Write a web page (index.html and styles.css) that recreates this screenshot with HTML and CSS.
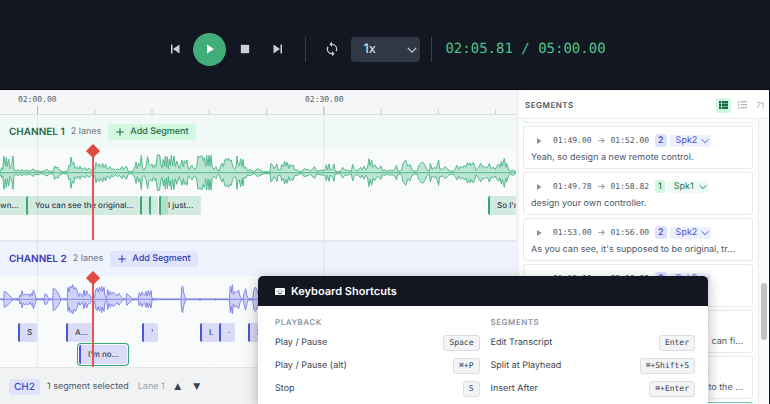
FILE: index.html
```html
<!DOCTYPE html>
<html lang="en">
<head>
<meta charset="utf-8">
<meta name="viewport" content="width=device-width, initial-scale=1.0">
<title>Segment editor</title>
<link rel="stylesheet" href="styles.css">
</head>
<body>

<svg class="sprite" aria-hidden="true">
	<symbol id="i-play" viewBox="0 0 24 24"><path d="M6 3v18l14-9z"/></symbol>
	<symbol id="i-prev" viewBox="0 0 24 24"><path d="M4 3h3v18H4zM21 3v18L8 12z"/></symbol>
	<symbol id="i-next" viewBox="0 0 24 24"><path d="M17 3h3v18h-3zM3 3v18l13-9z"/></symbol>
	<symbol id="i-stop" viewBox="0 0 24 24"><path d="M2 2h20v20H2z"/></symbol>
	<symbol id="i-sync" viewBox="0 0 24 24"><path d="M12 4V1L8 5l4 4V6a6 6 0 0 1 6 6c0 1-.25 1.970-.7 2.800l1.460 1.460A8 8 0 0 0 12 4zm0 14a6 6 0 0 1-6-6c0-1 .25-1.970.7-2.800L5.240 7.740A8 8 0 0 0 12 20v3l4-4-4-4z"/></symbol>
	<symbol id="i-down" viewBox="0 0 24 24"><path d="M2 7l10 10L22 7" fill="none" stroke="currentColor" stroke-width="3"/></symbol>
	<symbol id="i-arrow" viewBox="0 0 24 24"><path d="M1 12h20M13 4l8 8-8 8" fill="none" stroke="currentColor" stroke-width="4"/></symbol>
	<symbol id="i-plus" viewBox="0 0 24 24"><path d="M12 1v22M1 12h22" fill="none" stroke="currentColor" stroke-width="3"/></symbol>
	<symbol id="i-rows" viewBox="0 0 27 24"><path d="M0 0h7v7H0zM9 0h18v7H9zM0 8.500h7v7H0zM9 8.500h18v7H9zM0 17h7v7H0zM9 17h18v7H9z"/></symbol>
	<symbol id="i-list" viewBox="0 0 27 24"><path d="M0 1h4v4H0zM8 1h19v3H8zM0 10h4v4H0zM8 10h19v3H8zM0 19h4v4H0zM8 19h19v3H8z"/></symbol>
	<symbol id="i-keys" viewBox="0 0 30 21"><path fill-rule="evenodd" d="M3 0h24a3 3 0 0 1 3 3v15a3 3 0 0 1-3 3H3a3 3 0 0 1-3-3V3a3 3 0 0 1 3-3zM5 5v2h2V5zm5 0v2h2V5zm4 0v2h2V5zm4 0v2h2V5zm5 0v2h2V5zM5 10v2h2v-2zm5 0v2h2v-2zm4 0v2h2v-2zm4 0v2h2v-2zm5 0v2h2v-2zM9 15v2h12v-2z"/></symbol>
</svg>

<header class="player">
	<button class="ctl" aria-label="Previous"><svg><use href="#i-prev"/></svg></button>
	<button class="ctl play" aria-label="Play"><svg><use href="#i-play"/></svg></button>
	<button class="ctl stop" aria-label="Stop"><svg><use href="#i-stop"/></svg></button>
	<button class="ctl" aria-label="Next"><svg><use href="#i-next"/></svg></button>
	<span class="divider"></span>
	<button class="ctl sync" aria-label="Loop"><svg><use href="#i-sync"/></svg></button>
	<span class="pick speed">
		<select aria-label="Playback speed"><option>1x</option></select>
		<svg><use href="#i-down"/></svg>
	</span>
	<span class="divider"></span>
	<span class="clock">02:05.81 / 05:00.00</span>
</header>

<div class="workspace">
	<main class="timeline">
		<div class="ruler">
			<span class="stamp">02:00.00</span>
			<span class="stamp">02:30.00</span>
		</div>

		<section class="channel ch1">
			<div class="channel-head">
				<h2>CHANNEL 1</h2>
				<span class="lanes-count">2 lanes</span>
				<button class="add"><svg><use href="#i-plus"/></svg>Add Segment</button>
			</div>
			<div class="wave"><svg viewBox="0 0 1551 141" data-wave="ch1"></svg></div>
			<div class="lanes">
				<div class="lane">
					<div class="seg" style="left:-9px;width:35px">wn...</div>
					<div class="seg" style="left:26px;width:114px">You can see the original...</div>
					<div class="seg" style="left:140px;width:9px"></div>
					<div class="seg" style="left:149px;width:7px"></div>
					<div class="seg" style="left:159px;width:6px"></div>
					<div class="seg" style="left:159px;width:42px">I just...</div>
					<div class="seg" style="left:488px;width:90px">So I'm</div>
				</div>
				<div class="lane"></div>
			</div>
			<div class="playhead"></div>
		</section>

		<section class="channel ch2">
			<div class="channel-head">
				<h2>CHANNEL 2</h2>
				<span class="lanes-count">2 lanes</span>
				<button class="add"><svg><use href="#i-plus"/></svg>Add Segment</button>
			</div>
			<div class="wave"><svg viewBox="0 0 1551 141" data-wave="ch2"></svg></div>
			<div class="lanes">
				<div class="lane">
					<div class="seg" style="left:18px;width:19px">S</div>
					<div class="seg" style="left:66px;width:27px">A...</div>
					<div class="seg" style="left:142px;width:16px">'</div>
					<div class="seg" style="left:200px;width:19px">I.</div>
					<div class="seg" style="left:219px;width:16px">·</div>
					<div class="seg" style="left:248px;width:24px">S</div>
				</div>
				<div class="lane">
					<div class="seg selected" style="left:79px;width:48px">I'm no...</div>
				</div>
			</div>
			<div class="playhead"></div>
		</section>

		<footer class="selection">
			<span class="ch-tag">CH2</span>
			<span>1 segment selected</span>
			<span class="lane-name">Lane 1</span>
			<button class="move" aria-label="Move up">▲</button>
			<button class="move" aria-label="Move down">▼</button>
		</footer>
	</main>

	<aside class="sidebar">
		<div class="side-head">
			<h2>SEGMENTS</h2>
			<button class="view on" aria-label="Detailed view"><svg><use href="#i-rows"/></svg></button>
			<button class="view" aria-label="Compact view"><svg><use href="#i-list"/></svg></button>
			<span class="total">71</span>
		</div>
		<div class="side-body">
			<div class="cards">
				<article class="card"></article>
				<article class="card spk2">
					<div class="meta">
						<button class="mini" aria-label="Play segment"><svg><use href="#i-play"/></svg></button>
						<time>01:49.00</time><svg class="to"><use href="#i-arrow"/></svg><time>01:52.00</time>
						<span class="num">2</span>
						<span class="pick"><select aria-label="Speaker"><option>Spk2</option></select><svg><use href="#i-down"/></svg></span>
					</div>
					<p>Yeah, so design a new remote control.</p>
				</article>
				<article class="card spk1">
					<div class="meta">
						<button class="mini" aria-label="Play segment"><svg><use href="#i-play"/></svg></button>
						<time>01:49.78</time><svg class="to"><use href="#i-arrow"/></svg><time>01:58.82</time>
						<span class="num">1</span>
						<span class="pick"><select aria-label="Speaker"><option>Spk1</option></select><svg><use href="#i-down"/></svg></span>
					</div>
					<p>design your own controller.</p>
				</article>
				<article class="card spk2">
					<div class="meta">
						<button class="mini" aria-label="Play segment"><svg><use href="#i-play"/></svg></button>
						<time>01:53.00</time><svg class="to"><use href="#i-arrow"/></svg><time>01:56.00</time>
						<span class="num">2</span>
						<span class="pick"><select aria-label="Speaker"><option>Spk2</option></select><svg><use href="#i-down"/></svg></span>
					</div>
					<p>As you can see, it's supposed to be original, tr...</p>
				</article>
				<article class="card spk2">
					<div class="meta">
						<button class="mini" aria-label="Play segment"><svg><use href="#i-play"/></svg></button>
						<time>01:58.00</time><svg class="to"><use href="#i-arrow"/></svg><time>02:00.00</time>
						<span class="num">2</span>
						<span class="pick"><select aria-label="Speaker"><option>Spk2</option></select><svg><use href="#i-down"/></svg></span>
					</div>
				</article>
				<article class="card spk1 tail">
					<div class="meta">
						<span class="pick"><select aria-label="Speaker"><option>Spk1</option></select><svg><use href="#i-down"/></svg></span>
					</div>
					<p>can fi...</p>
				</article>
				<article class="card spk2 tail">
					<div class="meta">
						<span class="pick"><select aria-label="Speaker"><option>Spk2</option></select><svg><use href="#i-down"/></svg></span>
					</div>
					<p>to the ...</p>
				</article>
				<article class="card current"></article>
			</div>
			<div class="scrollbar"><div class="thumb"></div></div>
		</div>
	</aside>
</div>

<div class="modal" role="dialog" aria-labelledby="modal-title">
	<div class="modal-head">
		<svg><use href="#i-keys"/></svg>
		<h2 id="modal-title">Keyboard Shortcuts</h2>
	</div>
	<div class="modal-body">
		<section>
			<h3>PLAYBACK</h3>
			<dl>
				<div><dt>Play / Pause</dt><dd><kbd>Space</kbd></dd></div>
				<div><dt>Play / Pause (alt)</dt><dd><kbd>⌘+P</kbd></dd></div>
				<div><dt>Stop</dt><dd><kbd>S</kbd></dd></div>
			</dl>
		</section>
		<section>
			<h3>SEGMENTS</h3>
			<dl>
				<div><dt>Edit Transcript</dt><dd><kbd>Enter</kbd></dd></div>
				<div><dt>Split at Playhead</dt><dd><kbd>⌘+Shift+S</kbd></dd></div>
				<div><dt>Insert After</dt><dd><kbd>⌘+Enter</kbd></dd></div>
			</dl>
		</section>
	</div>
</div>

<script src="waves.js"></script>
</body>
</html>
```
FILE: styles.css
```css
* {
	box-sizing: border-box;
}

body,h2,h3,p,dl,dd {
	margin: 0;
	padding: 0;
}

body {
	display: flex;
	flex-direction: column;
	height: 100vh;
	overflow: hidden;
	position: relative;
	background: #121721;
	color: #4b5563;
	font-family: Inter, "Liberation Sans", sans-serif;
	font-size: 9px;
	line-height: 14px;
	text-rendering: geometricPrecision;
}

button,select {
	margin: 0;
	padding: 0;
	border: 0;
	background: none;
	color: inherit;
	font: inherit;
	text-rendering: inherit;
}

select {
	display: block;
	appearance: none;
	width: 100%;
}

svg {
	display: block;
	fill: currentColor;
}

.sprite {
	position: absolute;
	width: 0;
	height: 0;
}

/* player bar */
.player {
	display: flex;
	flex: none;
	align-items: center;
	justify-content: center;
	height: 90px;
	padding: 9px 6px 0 0;
	border-bottom: 1px solid #05070d;
	color: #cbd0d8;
}

.ctl {
	display: flex;
	align-items: center;
	justify-content: center;
	width: 33px;
	height: 33px;
}
.ctl svg {
	width: 12px;
	height: 12px;
}
.ctl.play {
	margin: 0 2px;
	border-radius: 50%;
	background: #41ad78;
	color: #fff;
}
.ctl.stop svg {
	width: 10px;
	height: 10px;
}
.ctl.sync {
	width: 26px;
	margin-left: 13px;
}
.ctl.sync svg {
	width: 16px;
	height: 16px;
}

.divider {
	width: 1px;
	height: 25px;
	margin: 0 0 0 11px;
	background: #384050;
}

.pick {
	position: relative;
	display: block;
}
.pick svg {
	position: absolute;
	right: 4px;
	top: 3px;
	width: 8px;
	height: 8px;
	pointer-events: none;
}

.speed {
	width: 69px;
	margin-left: 6px;
}
.speed select {
	height: 25px;
	padding-left: 12px;
	border-radius: 4px;
	background: #303845;
	color: #e2e5ea;
	font-size: 13px;
}
.speed svg {
	right: 3px;
	top: 8px;
	width: 10px;
	height: 10px;
}

.clock {
	margin-left: 13px;
	color: #4cc38a;
	font: 14px/20px "DejaVu Sans Mono", monospace;
}

/* workspace */
.workspace {
	display: flex;
	flex: 1;
	min-height: 0;
	margin-right: 1px;
	background: #fafbfc;
}

.timeline {
	display: flex;
	flex: 1;
	flex-direction: column;
	min-width: 0;
	overflow: hidden;
	background: #f9fafb;
}

.ruler {
	display: flex;
	flex: none;
	height: 25px;
	padding: 3px 0 0 18px;
	border-bottom: 1px solid #dcdee3;
	background:
		linear-gradient(to right, #b4b8c2 1px, transparent 1px) 37px 100% / 55.5% 8px repeat-x,
		linear-gradient(to right, #c9ccd3 1px, transparent 1px) 37px 100% / 11.1% 5px repeat-x,
		#f5f6f8;
}
.stamp {
	flex: none;
	width: 287px;
	font: 8px/14px "DejaVu Sans Mono", monospace;
}

.channel {
	position: relative;
	flex: none;
}
.ch1 {
	border-bottom: 2px solid #e6e8ec;
	color: #1d6b47;
}
.ch2 {
	color: #3538b5;
}
.channel:after {
	content: "";
	position: absolute;
	top: 0;
	right: 0;
	bottom: 0;
	left: 0;
	pointer-events: none;
	background:
		linear-gradient(to right, rgba(40,50,80,.06) 1px, transparent 1px) 37px 0 / 55.5% 100% repeat-x,
		linear-gradient(to right, rgba(40,50,80,.025) 1px, transparent 1px) 37px 0 / 11.1% 100% repeat-x;
}

.channel-head {
	display: flex;
	align-items: center;
	height: 34px;
	padding-left: 9px;
}
.ch1 .channel-head {
	background: #f0f9f5;
}
.ch2 .channel-head {
	background: #f0f3fd;
}
.channel-head h2 {
	font-size: 10px;
	font-weight: 600;
}
.lanes-count {
	margin: 0 7px 0 6px;
	color: #6b7280;
}
.add {
	display: flex;
	align-items: center;
	gap: 6px;
	height: 16px;
	padding: 0 7px 0 8px;
	border-radius: 3px;
	font-weight: 500;
}
.add svg {
	width: 8px;
	height: 8px;
}
.ch1 .add {
	background: #d1f7e1;
}
.ch2 .add {
	background: #dfe5fd;
}

.wave {
	height: 47px;
	overflow: hidden;
}
.wave svg {
	width: 517px;
	height: 47px;
}
.wave path {
	stroke-width: 3;
	stroke-linejoin: round;
}
.ch1 .wave path {
	fill: #bce5d3;
	stroke: #55ba8e;
}
.ch2 .wave path {
	fill: #cfd3f8;
	stroke: #8388ea;
}

.lanes {
	height: 44px;
}
.lane {
	position: relative;
	height: 22px;
}
/* segments sit at their time on the scale */
.seg {
	position: absolute;
	top: 0;
	height: 19px;
	padding-left: 7px;
	overflow: hidden;
	border-left: 2px solid #36a871;
	border-radius: 2px;
	background: rgba(54,168,113,.2);
	color: #374151;
	font-size: 8px;
	font-weight: 500;
	line-height: 19px;
	white-space: nowrap;
}
.ch2 .seg {
	border-left-color: #4a55e0;
	background: #d9dbf7;
}
.seg.selected {
	box-shadow: 0 0 0 1px #f4f6fa, 0 0 0 2px #36a871;
}

.playhead {
	position: absolute;
	z-index: 1;
	top: 35px;
	bottom: 0;
	left: 92px;
	width: 2px;
	background: #e0574e;
}
.playhead:before {
	content: "";
	position: absolute;
	top: -4px;
	left: -4px;
	width: 10px;
	height: 10px;
	background: #df4b41;
	transform: rotate(45deg);
}

.selection {
	display: flex;
	flex: 1;
	align-items: flex-start;
	padding: 11px 9px 0;
	border-top: 1px solid #e3e5e9;
	background: #f1f2f4;
	line-height: 16px;
}
.ch-tag {
	margin-right: 7px;
	padding: 0 5px;
	border-radius: 3px;
	background: #dfe4fc;
	color: #4046c4;
	font-size: 10px;
	font-weight: 500;
}
.lane-name {
	margin: 0 9px;
	color: #9aa0ab;
}
.move {
	width: 8px;
	margin-right: 11px;
	color: #374151;
	font: 9px/16px "DejaVu Sans", sans-serif;
}

/* sidebar */
.sidebar {
	display: flex;
	flex: none;
	flex-direction: column;
	width: 253px;
	border-left: 3px solid #f0f1f4;
	background: #fff;
}
.side-head {
	display: flex;
	flex: none;
	align-items: center;
	height: 29px;
	padding: 2px 5px 0 6px;
	border-bottom: 1px solid #eceef1;
}
.side-head h2 {
	flex: 1;
	font-size: 8px;
	font-weight: 600;
	letter-spacing: 0.5px;
}
.view {
	display: flex;
	align-items: center;
	justify-content: center;
	width: 15px;
	height: 15px;
	margin-right: 4px;
	border-radius: 3px;
	color: #9ca3af;
}
.view svg {
	width: 9px;
	height: 8px;
}
.view.on {
	background: #d1f7e0;
	color: #1c6b46;
}
.total {
	margin-left: 2px;
	color: #9ca3af;
	font-size: 8px;
}

.side-body {
	display: flex;
	flex: 1;
	min-height: 0;
}
.cards {
	display: flex;
	flex: 1;
	flex-direction: column;
	gap: 3px;
	min-width: 0;
	overflow: hidden;
	padding: 0 5px 0 4px;
}
.card {
	flex: none;
	height: 43px;
	padding: 7px 6px 0 7px;
	border: 1px solid #e7e9ed;
	border-radius: 3px;
	background: #fff;
}
.card:first-child {
	margin-top: -39px;
}
.card.current {
	border-color: #6fcf9f;
}
.card p {
	margin-top: 4px;
	overflow: hidden;
	white-space: nowrap;
}
.card.tail p {
	padding-right: 3px;
	text-align: right;
}
.meta {
	display: flex;
	align-items: center;
	height: 13px;
	padding-left: 4px;
}
.tail .meta {
	justify-content: flex-end;
	padding-right: 37px;
}
.meta time {
	font: 8px/13px "DejaVu Sans Mono", monospace;
}
.mini {
	width: 8px;
	margin-right: 10px;
	color: #8a919e;
}
.mini svg {
	width: 8px;
	height: 8px;
}
.to {
	width: 7px;
	height: 7px;
	margin: 0 6px;
	color: #9ca3af;
}
.num {
	margin: 0 3px 0 6px;
	padding: 0 3px;
	border-radius: 3px;
	font-weight: 500;
	line-height: 13px;
}
.meta .pick {
	width: 41px;
	border-radius: 3px;
}
.meta select {
	height: 12px;
	padding-left: 6px;
	line-height: 12px;
}
.meta .pick svg {
	right: 2px;
	top: 2px;
}
.spk1 .num {
	background: #d1f7e0;
	color: #1d7a4d;
}
.spk2 .num {
	background: #dde2fd;
	color: #4046c4;
}
.spk1 .pick {
	background: #ecfbf3;
	color: #1d7a4d;
}
.spk2 .pick {
	background: #eceffe;
	color: #4a4ed8;
}

.scrollbar {
	display: flex;
	flex: none;
	justify-content: center;
	width: 11px;
	padding-top: 164px;
	border-left: 1px solid #ececee;
	background: #fafafa;
}
.thumb {
	width: 6px;
	height: 57px;
	border-radius: 3px;
	background: #c1c2c4;
}

/* shortcuts dialog */
.modal {
	position: absolute;
	z-index: 5;
	top: 276px;
	right: 62px;
	bottom: 0;
	width: 450px;
	overflow: hidden;
	border-radius: 5px 5px 0 0;
	background: #fff;
	box-shadow: 0 4px 14px rgba(0,0,0,.3);
}
.modal-head {
	display: flex;
	align-items: center;
	gap: 6px;
	height: 30px;
	padding: 0 17px;
	background: #121721;
	color: #fff;
}
.modal-head svg {
	width: 10px;
	height: 7px;
}
.modal-head h2 {
	font-size: 11px;
	font-weight: 600;
}
.modal-body {
	display: grid;
	grid-template-columns: 1fr 1fr;
	gap: 11px;
	padding: 9px 13px 0 17px;
}
.modal-body h3 {
	margin-bottom: 2px;
	color: #8b93a1;
	font-size: 8px;
	font-weight: 600;
	letter-spacing: 0.5px;
}
.modal-body dl div {
	display: flex;
	align-items: center;
	justify-content: space-between;
	height: 23px;
	color: #374151;
}
kbd {
	display: block;
	padding: 0 5px;
	border: 1px solid #d9dce1;
	border-radius: 3px;
	background: #f3f4f6;
	font: 8px/14px "DejaVu Sans Mono", monospace;
}
```
FILE: waves.js
```js
// peaks as "position amplitude" pairs, three units per pixel
var waves = {
	ch1: {mid: 71, peaks: '0 3,5 15,8 8,12 50,16 20,19 45,22 18,26 40,30 12,35 22,39 50,42 8,48 5,55 9,60 4,66 10,70 4,80 8,84 4,95 7,100 12,104 5,115 6,122 3,132 5,140 10,146 6,152 3,160 5,164 20,168 14,174 16,180 6,190 3,203 5,207 22,210 18,213 47,217 25,221 32,225 12,230 18,236 10,240 20,244 10,250 12,256 15,260 8,268 14,274 8,280 10,284 8,288 30,292 18,297 26,302 16,308 28,312 14,317 25,322 10,330 18,335 8,340 13,346 6,352 12,358 8,366 18,370 8,376 18,380 19,384 5,392 3,400 6,405 18,408 32,412 12,416 28,420 20,424 52,427 14,432 8,438 20,443 48,447 24,451 20,456 26,460 14,464 24,468 18,472 53,479 53,482 25,486 14,490 40,493 20,496 50,499 16,502 48,505 12,508 40,511 22,514 52,518 20,522 50,526 18,530 35,534 22,538 12,542 25,546 38,550 18,553 36,557 28,561 38,565 10,570 14,576 22,580 12,585 10,590 18,594 50,600 46,605 52,610 36,613 45,617 18,620 52,624 20,627 52,630 20,633 52,637 16,642 10,648 18,652 8,658 5,662 20,666 28,670 18,674 38,678 42,682 36,686 44,690 36,694 38,698 20,703 12,708 15,711 50,714 24,718 22,722 42,726 18,729 40,732 14,738 16,743 6,750 10,756 5,764 3,772 12,780 8,790 3,810 3,813 28,818 22,822 12,828 20,831 26,834 8,842 8,845 24,850 18,854 34,858 20,862 32,866 12,870 25,875 20,880 22,884 8,892 8,900 3,906 4,912 12,918 10,924 9,932 5,938 12,944 18,948 6,955 5,965 8,972 6,976 12,979 24,982 8,987 26,990 8,998 12,1002 26,1005 5,1015 3,1022 4,1028 16,1034 8,1040 8,1048 6,1054 4,1058 25,1062 12,1068 6,1076 8,1082 16,1086 8,1093 20,1097 8,1102 12,1107 42,1110 20,1115 38,1119 16,1124 24,1130 14,1136 12,1143 20,1147 6,1155 8,1162 4,1170 8,1176 6,1184 10,1190 22,1193 5,1200 4,1205 8,1209 28,1214 32,1217 38,1220 28,1224 18,1230 25,1236 8,1245 4,1252 5,1256 20,1262 28,1268 32,1274 24,1280 10,1288 4,1291 28,1296 10,1303 16,1308 12,1312 24,1316 38,1319 12,1328 10,1336 18,1342 12,1350 5,1360 4,1367 14,1371 22,1376 10,1382 20,1388 14,1393 22,1398 16,1402 30,1406 22,1410 30,1414 20,1418 30,1422 28,1428 6,1436 16,1442 28,1446 16,1452 20,1458 14,1463 16,1468 28,1474 12,1480 16,1486 10,1491 20,1496 26,1500 16,1504 34,1507 20,1513 44,1517 16,1520 28,1526 8,1532 5,1540 8,1548 2'},
	ch2: {mid: 70, peaks: '0 1,11 1,13 24,20 20,38 2,42 1,58 3,60 14,63 8,66 26,70 12,74 16,80 14,86 16,90 8,94 18,97 12,100 28,104 18,108 3,112 1,132 2,135 16,140 14,146 2,158 1,160 34,168 28,176 16,182 2,188 1,202 2,204 36,207 22,211 40,215 34,218 44,222 30,226 36,232 24,236 8,240 18,244 14,248 8,252 28,256 10,260 26,264 14,270 12,275 4,284 6,286 25,290 34,294 22,298 36,302 24,305 40,308 24,312 36,315 10,320 2,323 30,327 12,331 24,335 14,340 22,346 16,352 10,356 18,362 10,368 2,378 1,380 18,388 10,398 2,414 1,418 20,422 10,426 22,430 14,434 12,438 24,441 10,445 26,449 12,453 26,456 2,474 1,543 1,545 34,548 40,552 16,557 1,598 1,600 4,602 1,645 1,648 3,650 1,688 1,691 40,694 20,697 44,700 14,705 24,710 20,716 28,720 10,724 2,729 1,733 20,737 32,741 10,745 2,758 2,762 30,766 36,770 30,776 10,790 2,1548 1'}
};

document.querySelectorAll('[data-wave]').forEach(function (svg) {
	var wave = waves[svg.getAttribute('data-wave')],
		top = [], bottom = [],
		path = document.createElementNS('http://www.w3.org/2000/svg', 'path');

	wave.peaks.split(',').forEach(function (peak) {
		var p = peak.split(' ');
		top.push(p[0] + ' ' + (wave.mid - p[1]));
		bottom.unshift(p[0] + ' ' + (wave.mid + +p[1]));
	});
	// second subpath is the centre line
	path.setAttribute('d', 'M' + top.concat(bottom).join('L') + 'ZM0 ' + wave.mid + 'H1548');
	svg.appendChild(path);
});
```
